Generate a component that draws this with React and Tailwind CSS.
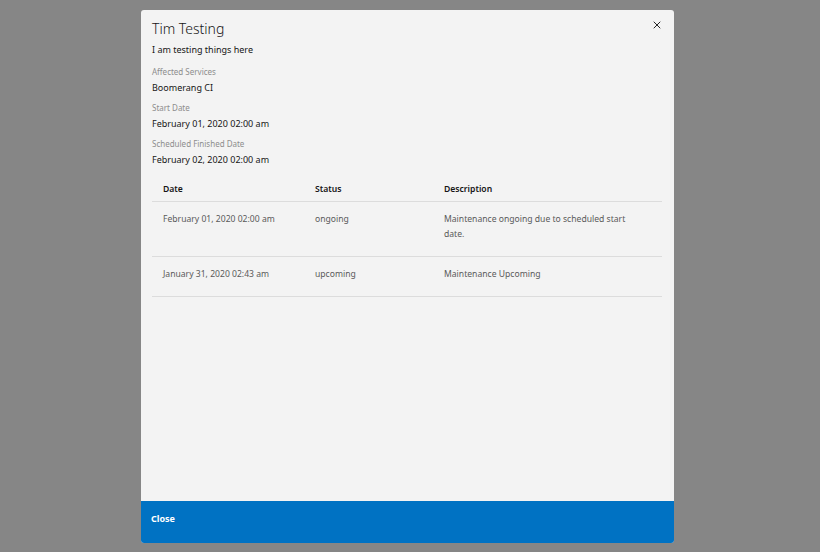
import React from 'react';
import { X } from 'lucide-react';

const ROWS = [
    { date: 'February 01, 2020 02:00 am', status: 'ongoing', description: 'Maintenance ongoing due to scheduled start date.' },
    { date: 'January 31, 2020 02:43 am', status: 'upcoming', description: 'Maintenance Upcoming' },
];

const FIELDS = [
    { label: 'Affected Services', value: 'Boomerang CI' },
    { label: 'Start Date', value: 'February 01, 2020 02:00 am' },
    { label: 'Scheduled Finished Date', value: 'February 02, 2020 02:00 am' },
];

const App = () => {
    return (
        <div className="w-[820px] h-[552px] bg-[#868686] flex pt-[10px] font-['Noto_Sans',sans-serif]">
            <div className="ml-[141px] w-[533px] h-[533px] bg-[#f3f3f3] rounded-[3px] flex flex-col overflow-hidden">
                <div className="flex-1 pl-[11px] pr-[12px] pt-[10px]">
                    <div className="flex justify-between items-start">
                        <h2 className="text-[14px] leading-[18px] text-[#161616] font-light">Tim Testing</h2>
                        <button className="mt-[-1px] mr-[-1px] text-[#262626]">
                            <X className="w-[12px] h-[12px]" strokeWidth={2} />
                        </button>
                    </div>
                    <p className="text-[9px] leading-[12px] text-[#161616] mt-[6px]">I am testing things here</p>

                    <div className="mt-[10px] space-y-[8px]">
                        {FIELDS.map((f) => (
                            <div key={f.label}>
                                <div className="text-[8px] leading-[12px] text-[#8d8d8d]">{f.label}</div>
                                <div className="text-[9px] leading-[12px] text-[#161616] mt-[4px]">{f.value}</div>
                            </div>
                        ))}
                    </div>

                    <table className="w-full mt-[16px] text-[8.6px] leading-[15px]">
                        <thead>
                            <tr className="border-b border-[#dcdcdc] text-[#161616] text-left">
                                <th className="font-semibold pl-[11px] pb-[4px] w-[163px]">Date</th>
                                <th className="font-semibold pb-[4px] w-[129px]">Status</th>
                                <th className="font-semibold pb-[4px]">Description</th>
                            </tr>
                        </thead>
                        <tbody className="text-[#5a5a5a] align-top">
                            {ROWS.map((row) => (
                                <tr key={row.date} className="border-b border-[#dcdcdc]">
                                    <td className="pl-[11px] pt-[10px] pb-[14px]">{row.date}</td>
                                    <td className="pt-[10px] pb-[14px]">{row.status}</td>
                                    <td className="pt-[10px] pb-[14px] pr-[22px]">{row.description}</td>
                                </tr>
                            ))}
                        </tbody>
                    </table>
                </div>

                <div className="h-[42px] bg-[#0072c3] px-[10px] pt-[12px]">
                    <span className="block text-white text-[9px] leading-[12px] font-bold">Close</span>
                </div>
            </div>
        </div>
    );
};

export default App;
